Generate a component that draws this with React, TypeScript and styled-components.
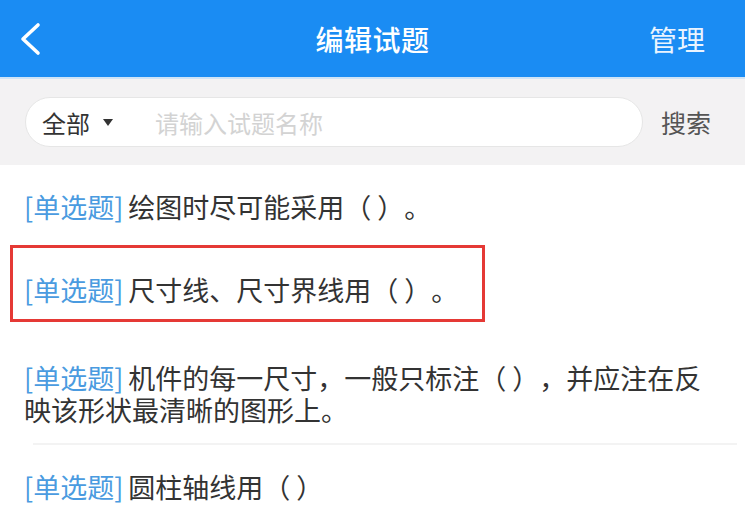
import React from 'react'
import styled, { createGlobalStyle } from 'styled-components'

type Question = { id: number; text: string; marked?: boolean; divided?: boolean }

const questions: Question[] = [
  { id: 1, text: '绘图时尽可能采用（ ）。' },
  { id: 2, text: '尺寸线、尺寸界线用（ ）。', marked: true },
  { id: 3, text: '机件的每一尺寸，一般只标注（ ），并应注在反映该形状最清晰的图形上。', divided: true },
  { id: 4, text: '圆柱轴线用（ ）' },
]

const App = () => (
  <Page>
    <GlobalStyle />
    <Header>
      <BackButton aria-label="返回">
        <svg width="22" height="34" viewBox="0 0 22 34">
          <polyline points="19,3 4,17 19,31" fill="none" stroke="#fff" strokeWidth="3.6" strokeLinecap="round" strokeLinejoin="round" />
        </svg>
      </BackButton>
      <Title>编辑试题</Title>
      <HeaderAction>管理</HeaderAction>
    </Header>

    <SearchBar>
      <SearchField>
        <Filter>
          全部
          <Caret />
        </Filter>
        <Input placeholder="请输入试题名称" />
      </SearchField>
      <SearchButton>搜索</SearchButton>
    </SearchBar>

    <List>
      {questions.map(q => (
        <Item key={q.id} $marked={q.marked} $divided={q.divided}>
          {q.marked && <Mark />}
          <Tag>[单选题]</Tag>
          {q.text}
        </Item>
      ))}
    </List>
  </Page>
)

export default App

// Styles
const GlobalStyle = createGlobalStyle`
  html, body {
    margin: 0;
    padding: 0;
    background: #fff;
  }
  body {
    font-family: "Noto Sans CJK SC", "Noto Sans", sans-serif;
  }
`

const Page = styled.div`
  width: 745px;
  min-height: 528px;
  background: #fff;
  overflow: hidden;
`

const Header = styled.header`
  height: 77px;
  background: #1a8cf3;
  border-bottom: 2px solid #cfe4f7;
  display: grid;
  grid-template-columns: 120px 1fr 120px;
  align-items: center;
  color: #fff;
`

const BackButton = styled.div`
  display: flex;
  align-items: center;
  padding-left: 19px;
  padding-top: 1px;
`

const Title = styled.h1`
  margin: 0;
  text-align: center;
  font-size: 28px;
  font-weight: 500;
  letter-spacing: 0.5px;
`

const HeaderAction = styled.div`
  text-align: right;
  padding-right: 40px;
  font-size: 28px;
  color: #eaf4ff;
`

const SearchBar = styled.div`
  height: 86px;
  background: #f3f2f3;
  display: flex;
  align-items: center;
  padding: 0 34px 0 25px;
  gap: 18px;
`

const SearchField = styled.div`
  flex: 1;
  height: 50px;
  box-sizing: border-box;
  border-radius: 25px;
  background: #fff;
  border: 1px solid #e6e6e6;
  display: flex;
  align-items: center;
  padding-left: 16px;
`

const Filter = styled.div`
  display: flex;
  align-items: center;
  gap: 13px;
  font-size: 24px;
  color: #333;
  margin-right: 40px;
`

const Caret = styled.span`
  width: 0;
  height: 0;
  border-left: 5px solid transparent;
  border-right: 5px solid transparent;
  border-top: 7px solid #333;
`

const Input = styled.input`
  flex: 1;
  min-width: 0;
  border: none;
  outline: none;
  background: transparent;
  font-family: inherit;
  font-size: 24px;
  color: #333;

  &::placeholder {
    color: #d3d3d3;
  }
`

const SearchButton = styled.div`
  font-size: 25px;
  color: #555;
`

const List = styled.div`
  display: flex;
  flex-direction: column;
`

const Item = styled.div<{ $marked?: boolean; $divided?: boolean }>`
  position: relative;
  padding: 26px 40px 25px 24px;
  padding-bottom: ${p => (p.$marked ? '30px' : p.$divided ? '19px' : '25px')};
  font-size: 27px;
  line-height: 32px;
  color: #333;
  text-spacing-trim: space-all;

  &::after {
    content: '';
    display: ${p => (p.$divided ? 'block' : 'none')};
    position: absolute;
    left: 33px;
    right: 8px;
    bottom: 0;
    height: 2px;
    background: #f3f3f3;
  }
`

const Tag = styled.span`
  color: #4a9be0;
  margin-right: 5px;
`

const Mark = styled.span`
  position: absolute;
  left: 10px;
  top: -3px;
  width: 475px;
  height: 77px;
  box-sizing: border-box;
  border: 3px solid #e53935;
  pointer-events: none;
`
